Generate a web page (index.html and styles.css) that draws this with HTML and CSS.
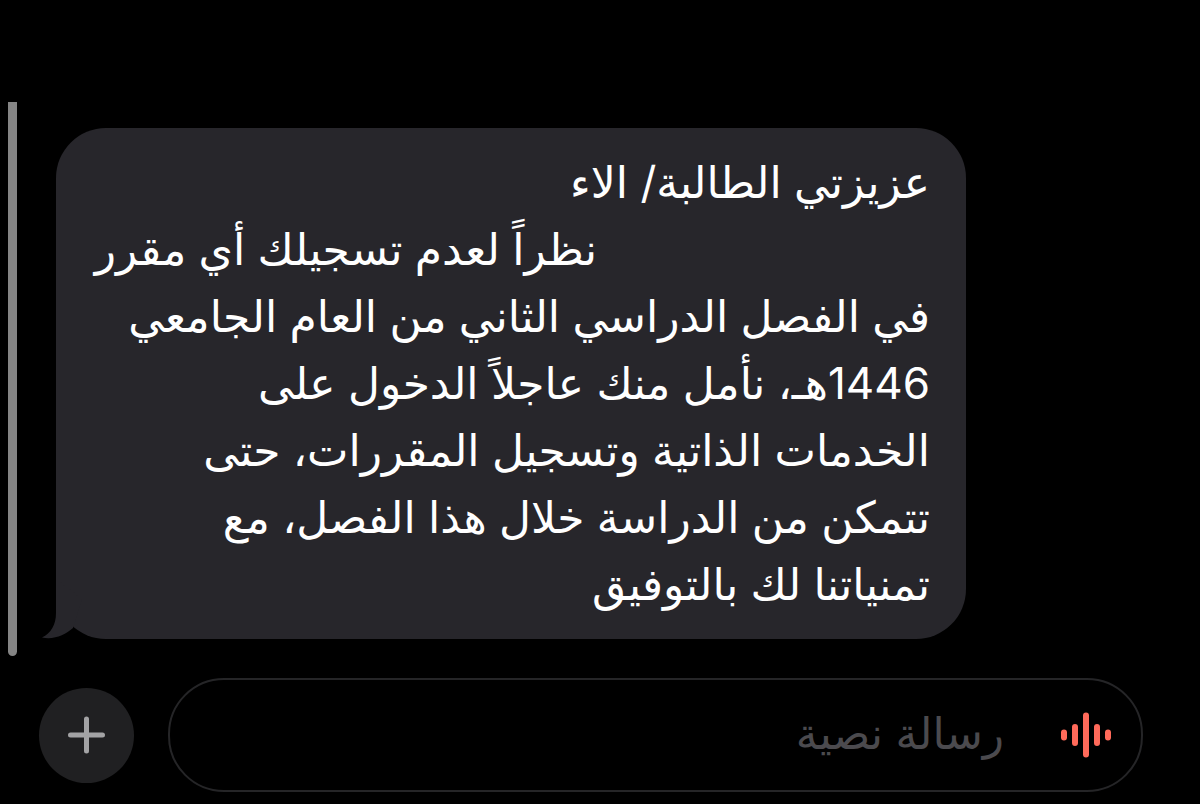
FILE: index.html
```html
<!DOCTYPE html>
<html lang="ar">
<head>
  <meta charset="UTF-8" />
  <meta name="viewport" content="width=device-width, initial-scale=1.0" />
  <title>الرسائل</title>
  <link rel="stylesheet" href="styles.css">
</head>
<body>
  <main class="chat">
    <div class="thread">
      <div class="scrollbar"></div>
      <div class="bubble">
        <p class="message" dir="rtl">
          <span class="line">عزيزتي الطالبة/ الاء</span>
          <span class="line"><span class="blank"></span>نظراً لعدم تسجيلك أي مقرر</span>
          <span class="line">في الفصل الدراسي الثاني من العام الجامعي</span>
          <span class="line">1446هـ، نأمل منك عاجلاً الدخول على</span>
          <span class="line">الخدمات الذاتية وتسجيل المقررات، حتى</span>
          <span class="line">تتمكن من الدراسة خلال هذا الفصل، مع</span>
          <span class="line">تمنياتنا لك بالتوفيق</span>
        </p>
        <svg class="tail" width="60" height="60" viewBox="0 0 60 60" aria-hidden="true">
          <path d="M14 0 V34 C14 46 9 54 0 58.5 C12 61 23 56 31 49 L40 20 Z" />
        </svg>
      </div>
    </div>

    <form class="composer" id="composer">
      <button class="add" type="button" aria-label="إضافة">
        <svg width="38" height="38" viewBox="0 0 38 38" aria-hidden="true">
          <path d="M18.5 3 V35 M2.5 19 H34.5" />
        </svg>
      </button>
      <div class="field" dir="rtl">
        <button class="voice" type="button" aria-label="تسجيل صوتي">
          <svg width="52" height="46" viewBox="0 0 52 46" aria-hidden="true">
            <path d="M4 20.5 V25.5 M15 15 V31 M26 3.5 V42.5 M37 15 V31 M48 20.5 V25.5" />
          </svg>
        </button>
        <input type="text" id="text" name="text" aria-label="رسالة نصية" placeholder="رسالة نصية">
      </div>
    </form>
  </main>
</body>
</html>
```
FILE: styles.css
```css
* {
  box-sizing: border-box;
}
body {
  margin: 0;
  background: #000;
  font-family: Inter, "DejaVu Sans", sans-serif;
}
.chat {
  padding: 102px 57px 12px 8px;
}
.thread {
  display: flex;
  gap: 39px;
}
.scrollbar {
  flex: none;
  width: 9px;
  background: #858585;
  border-radius: 0 0 5px 5px;
}
.bubble {
  position: relative;
  flex: 1;
  max-width: 910px;
  margin: 26px 0 17px;
  padding: 21px 36px;
  background: #27262b;
  border-radius: 50px;
}
.message {
  margin: 0;
  color: #fff;
  font-size: 44px;
  line-height: 67px;
}
.line {
  display: block;
  white-space: nowrap;
}
.blank {
  display: inline-block;
  width: 333px;
}
.tail {
  position: absolute;
  left: -14px;
  bottom: 0;
  fill: #27262b;
}
.composer {
  display: flex;
  align-items: center;
  gap: 34px;
  margin: 22px 0 0 31px;
}
.add {
  display: flex;
  flex: none;
  align-items: center;
  justify-content: center;
  width: 95px;
  height: 95px;
  padding: 0;
  background: #202022;
  border: none;
  border-radius: 50%;
  cursor: pointer;
}
.add svg {
  fill: none;
  stroke: #a3a3a5;
  stroke-width: 5;
  stroke-linecap: round;
}
.field {
  display: flex;
  flex: 1;
  align-items: center;
  gap: 56px;
  height: 114px;
  padding: 0 29px;
  border: 2px solid #252527;
  border-radius: 56px;
}
.voice {
  display: flex;
  flex: none;
  padding: 0;
  background: none;
  border: none;
  cursor: pointer;
}
.voice svg {
  fill: none;
  stroke: #ff6a5a;
  stroke-width: 6;
  stroke-linecap: round;
}
.field input {
  flex: 1;
  min-width: 0;
  height: 67px;
  padding: 0 0 4px;
  background: none;
  border: none;
  outline: none;
  color: #fff;
  font-family: inherit;
  font-size: 44px;
}
.field input::placeholder {
  color: #4b4a4e;
  opacity: 1;
}
```
